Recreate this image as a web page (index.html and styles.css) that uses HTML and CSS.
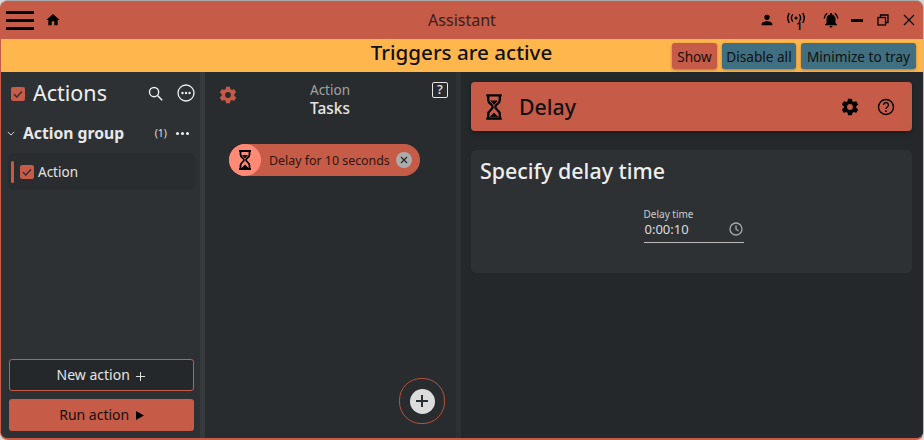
FILE: index.html
```html
<!DOCTYPE html>
<html lang="en">
<head>
<meta charset="utf-8">
<title>Assistant</title>
<link rel="stylesheet" href="styles.css">
</head>
<body>
<svg class="defs" width="0" height="0">
  <symbol id="hourglass" viewBox="0 0 14 20"><g fill="none" stroke="#000" stroke-width="1.800"><path d="M1 1h12M1 19h12"/><path d="M2.500 1v3.500c0 3 3.500 3.500 3.500 5.500s-3.500 2.500-3.500 5.500V19"/><path d="M11.500 1v3.500c0 3-3.500 3.500-3.500 5.500s3.500 2.500 3.500 5.500V19"/></g><path d="M4 5h6L7 8.500z"/><path d="M3.500 18 7 14.500l3.500 3.500z"/></symbol>
  <symbol id="gear" viewBox="0 0 24 24"><path d="M19.400 13c.04-.32.07-.66.07-1s-.03-.68-.07-1l2.110-1.650c.19-.15.24-.42.12-.64l-2-3.460c-.12-.22-.39-.3-.61-.22l-2.490 1c-.52-.4-1.080-.73-1.690-.98l-.38-2.650A.49.49 0 0 0 14 2h-4c-.25 0-.46.18-.49.420l-.38 2.650c-.61.25-1.170.59-1.690.98l-2.490-1c-.23-.09-.49 0-.61.220l-2 3.460c-.13.22-.07.49.12.640L4.570 11c-.04.32-.07.66-.07 1s.03.68.07 1l-2.110 1.650c-.19.15-.24.42-.12.64l2 3.460c.12.22.39.3.61.22l2.490-1c.52.4 1.080.73 1.690.98l.38 2.650c.03.24.24.42.49.42h4c.25 0 .46-.18.49-.42l.38-2.650c.61-.25 1.170-.59 1.690-.98l2.490 1c.23.09.49 0 .61-.22l2-3.460c.12-.22.07-.49-.12-.64L19.400 13zM12 15.500a3.500 3.500 0 1 1 0-7 3.500 3.500 0 0 1 0 7z"/></symbol>
  <symbol id="check" viewBox="0 0 16 16"><rect x="1" y="1" width="14" height="14" rx="2" fill="#c65b47"/><path d="M4 8.200l2.800 2.800L12 5.500" fill="none" stroke="#2b2e31" stroke-width="1.300"/></symbol>
</svg>
<div class="window">
  <header class="titlebar">
    <div class="title-left">
      <div class="burger"><span></span><span></span><span></span></div>
      <svg class="ico home" viewBox="0 0 24 24"><path d="M10 20v-6h4v6h5v-8h3L12 3 2 12h3v8z"/></svg>
    </div>
    <div class="app-title">Assistant</div>
    <div class="title-right">
      <svg class="ico person" viewBox="0 0 24 24"><path d="M12 12a4 4 0 1 0 0-8 4 4 0 0 0 0 8zm0 2c-2.700 0-8 1.300-8 4v2h16v-2c0-2.700-5.300-4-8-4z"/></svg>
      <div class="antenna">
        <svg viewBox="0 0 24 16"><circle cx="12" cy="8" r="1.800"/><g fill="none" stroke="#000" stroke-width="1.700" stroke-linecap="round"><path d="M8 4.500a6 6 0 0 0 0 7"/><path d="M16 4.500a6 6 0 0 1 0 7"/><path d="M4 3a10 10 0 0 0 0 10"/><path d="M20 3a10 10 0 0 1 0 10"/></g></svg>
        <span class="antenna-count">1</span>
      </div>
      <svg class="ico bell" viewBox="0 0 24 24"><path d="M12 22a2 2 0 0 0 2-2h-4a2 2 0 0 0 2 2zm6-6v-5c0-3.100-1.600-5.600-4.500-6.300V4a1.500 1.500 0 0 0-3 0v.7C7.600 5.400 6 7.900 6 11v5l-2 2v1h16v-1l-2-2z"/><path d="M7.600 3.600 6.200 2.200A10.400 10.400 0 0 0 2 10h2a8.400 8.400 0 0 1 3.600-6.400zM20 10h2a10.400 10.400 0 0 0-4.200-7.800l-1.400 1.400A8.400 8.400 0 0 1 20 10z"/></svg>
      <span class="minimize"></span>
      <svg class="restore" viewBox="0 0 12 12" fill="none" stroke="#000" stroke-width="1.300"><rect x="1" y="3.500" width="7.500" height="7.500"/><path d="M3.500 3.500V1H11v7.500H8.500"/></svg>
      <svg class="close" viewBox="0 0 12 12" fill="none" stroke="#000" stroke-width="1.100"><path d="M1 1l10 10M11 1 1 11"/></svg>
    </div>
  </header>
  <div class="banner">
    <div class="banner-text">Triggers are active</div>
    <div class="banner-buttons">
      <button class="bbtn bbtn-red">Show</button>
      <button class="bbtn bbtn-teal">Disable all</button>
      <button class="bbtn bbtn-teal">Minimize to tray</button>
    </div>
  </div>
  <main class="panels">
    <aside class="sidebar">
      <div class="side-head">
        <svg class="head-check"><use href="#check"/></svg>
        <span class="side-title">Actions</span>
        <svg class="side-search" viewBox="0 0 24 24" fill="none" stroke="#eee" stroke-width="2"><circle cx="10" cy="10" r="6.500"/><path d="M15 15l6.500 6.500"/></svg>
        <svg class="side-more" viewBox="0 0 20 20"><circle cx="10" cy="10" r="8" fill="none" stroke="#eee" stroke-width="1.300"/><circle cx="6.500" cy="10" r="1.200" fill="#eee"/><circle cx="10" cy="10" r="1.200" fill="#eee"/><circle cx="13.500" cy="10" r="1.200" fill="#eee"/></svg>
      </div>
      <div class="group">
        <svg class="chev" viewBox="0 0 10 6" fill="none" stroke="#ddd" stroke-width="1.200"><path d="M1 1l4 4 4-4"/></svg>
        <span class="group-name">Action group</span>
        <span class="group-count">(1)</span>
        <span class="dots"><i></i><i></i><i></i></span>
      </div>
      <div class="action-row">
        <span class="action-mark"></span>
        <svg class="row-check"><use href="#check"/></svg>
        <span class="action-name">Action</span>
      </div>
      <div class="side-actions">
        <button class="btn-new">New action <svg class="plus" viewBox="0 0 12 12" stroke="#ddd" stroke-width="1.100"><path d="M6 1v10M1 6h10"/></svg></button>
        <button class="btn-run">Run action <svg class="play" viewBox="0 0 8 9"><path d="M0 0l8 4.500L0 9z"/></svg></button>
      </div>
    </aside>
    <section class="tasks">
      <div class="tasks-head">
        <svg class="tasks-gear"><use href="#gear"/></svg>
        <div class="tasks-title"><div class="tasks-sub">Action</div><div class="tasks-name">Tasks</div></div>
        <span class="help-box">?</span>
      </div>
      <div class="chip">
        <span class="chip-icon"><svg class="chip-glass"><use href="#hourglass"/></svg></span>
        <span class="chip-text">Delay for 10 seconds</span>
        <span class="chip-x"><svg viewBox="0 0 8 8" stroke="#222" stroke-width="1.100"><path d="M1 1l6 6M7 1 1 7"/></svg></span>
      </div>
      <div class="fab-wrap">
        <div class="fab-ring"><span class="fab"><svg viewBox="0 0 14 14" stroke="#2b2e31" stroke-width="2"><path d="M7 1v12M1 7h12"/></svg></span></div>
      </div>
    </section>
    <section class="detail">
      <div class="detail-head">
        <svg class="detail-glass"><use href="#hourglass"/></svg>
        <span class="detail-title">Delay</span>
        <svg class="detail-gear"><use href="#gear"/></svg>
        <svg class="detail-help" viewBox="0 0 20 20"><circle cx="10" cy="10" r="7.500" fill="none" stroke="#000" stroke-width="1.400"/><path d="M7.600 8a2.400 2.400 0 1 1 3.700 2c-.9.600-1.300 1-1.300 2" fill="none" stroke="#000" stroke-width="1.400"/><circle cx="10" cy="14.200" r=".9"/></svg>
      </div>
      <div class="card">
        <h2 class="card-title">Specify delay time</h2>
        <div class="field-wrap">
          <div class="field">
            <div class="field-label">Delay time</div>
            <div class="field-input"><span>0:00:10</span><svg class="clock" viewBox="0 0 16 16" fill="none" stroke="#a5a7a9" stroke-width="1.300"><circle cx="8" cy="8" r="6"/><path d="M8 4.500V8l2.500 2"/></svg></div>
          </div>
        </div>
      </div>
    </section>
  </main>
</div>
</body>
</html>
```
FILE: styles.css
```css
* { box-sizing: border-box; }
html, body { margin: 0; height: 100%; }
body {
  width: 924px;
  height: 440px;
  overflow: hidden;
  background: #d8d8d8;
  font-family: "Noto Sans", "Open Sans", sans-serif;
  color: #eee;
}
.defs { position: absolute; }
button { font-family: inherit; cursor: pointer; }
.window {
  width: 924px;
  height: 440px;
  display: flex;
  flex-direction: column;
  background: #c65b47;
  border: 1px solid #c65b47;
  border-top: 1px solid #aaa;
  border-right: 1px solid #bbb;
  border-bottom: 2px solid #c65b47;
  border-radius: 8px;
  overflow: hidden;
}
.titlebar {
  height: 38px;
  flex: none;
  display: flex;
  align-items: center;
  position: relative;
  background: #c65b47;
  padding: 0 7px 0 5px;
}
.title-left { display: flex; align-items: center; gap: 11px; }
.burger { width: 28px; display: flex; flex-direction: column; gap: 5px; }
.burger span { height: 3px; background: #000; }
.ico { fill: #000; display: block; }
.home { width: 16px; height: 16px; }
.app-title {
  position: absolute;
  left: 0; right: 0;
  top: 8px;
  text-align: center;
  font-size: 16px;
  line-height: 22px;
  color: #3a1f1a;
}
.title-right { margin-left: auto; display: flex; align-items: center; }
.person { width: 16px; height: 16px; margin-right: 10px; }
.antenna { width: 22px; height: 20px; position: relative; margin-right: 15px; margin-top: 2px; }
.antenna svg { width: 22px; height: 14px; display: block; }
.antenna-count { position: absolute; left: 11px; top: 8px; font-size: 11px; line-height: 13px; font-weight: 600; color: #000; }
.bell { width: 18px; height: 18px; margin-right: 11px; }
.minimize { width: 12px; height: 3px; background: #000; margin-right: 14px; }
.restore { width: 12px; height: 12px; margin-right: 12px; }
.close { width: 12px; height: 12px; margin-right: 1px; margin-left: 2px; }
.banner {
  height: 33px;
  flex: none;
  position: relative;
  background: #ffb74d;
  display: flex;
  align-items: center;
  justify-content: flex-end;
  padding-right: 7px;
}
.banner-text {
  position: absolute;
  left: 0; right: 0;
  top: 0;
  text-align: center;
  padding-right: 1px;
  font-size: 20.600px;
  line-height: 26px;
  font-weight: 500;
  color: #111;
}
.banner-buttons { display: flex; gap: 5px; position: relative; margin-top: 1px; }
.bbtn {
  height: 26px;
  padding: 0;
  border: 0;
  border-radius: 3px;
  font-size: 13.600px;
  color: #111;
  box-shadow: 0 1px 3px rgba(0,0,0,.35);
  white-space: nowrap;
}
.bbtn-red { background: #c65b47; width: 45px; }
.bbtn-teal { background: #3f6f80; }
.bbtn-teal:nth-child(2) { width: 74px; }
.bbtn-teal:nth-child(3) { width: 115px; }
.panels { flex: 1; display: flex; min-height: 0; background: #25282a; }
.sidebar {
  width: 204px;
  flex: none;
  display: flex;
  flex-direction: column;
  background: #2e3134;
  border-right: 5px solid #363a3d;
  padding: 0 5px 0 8px;
  border-bottom-left-radius: 6px;
}
.side-head { height: 42px; display: flex; align-items: center; padding-left: 1px; }
.head-check { width: 16px; height: 16px; margin-right: 7px; margin-top: 2px; }
.side-title { font-size: 21.500px; line-height: 30px; color: #eee; }
.side-search { width: 17px; height: 17px; margin-left: auto; }
.side-more { width: 20px; height: 20px; margin-left: 12px; margin-right: -1px; }
.group { height: 38px; display: flex; align-items: center; }
.chev { width: 8px; height: 5px; margin-right: 8px; margin-left: -2px; }
.group-name { font-size: 15.700px; font-weight: 700; color: #e8e8e8; }
.group-count { font-size: 10.500px; color: #ddd; margin-left: auto; margin-right: 9px; }
.dots { display: flex; gap: 2px; margin-right: 6px; }
.dots i { width: 3px; height: 3px; border-radius: 50%; background: #eee; }
.action-row {
  height: 37px;
  margin: 1px 0 0 -1px;
  display: flex;
  align-items: center;
  background: #2a2d30;
  border-radius: 5px;
  padding-left: 3px;
}
.action-mark { width: 3px; height: 22px; border-radius: 2px; background: #c65b47; margin-right: 5px; }
.row-check { width: 16px; height: 16px; margin-right: 3px; }
.action-name { font-size: 13.500px; color: #e4e4e4; }
.side-actions { margin: auto 1px 0 0; display: flex; flex-direction: column; gap: 8px; padding-bottom: 7px; }
.btn-new {
  height: 32px;
  background: #25282a;
  border: 1px solid #c65b47;
  border-radius: 3px;
  font-size: 14px;
  color: #e4e4e4;
  padding: 0 0 2px;
}
.plus { width: 11px; height: 11px; margin-left: 2px; vertical-align: -2px; }
.btn-run {
  height: 32px;
  background: #c65b47;
  border: 0;
  border-radius: 3px;
  font-size: 14px;
  color: #111;
  padding: 0 0 2px;
}
.play { width: 8px; height: 9px; margin-left: 3px; }
.tasks {
  width: 256px;
  flex: none;
  display: flex;
  flex-direction: column;
  background: #292c2f;
  border-right: 5px solid #2e3134;
  padding: 0 8px 14px 13px;
}
.tasks-head { height: 52px; display: flex; align-items: flex-start; position: relative; }
.tasks-gear { width: 20px; height: 20px; fill: #c65b47; margin-top: 13px; flex: none; }
.tasks-title { flex: 1; text-align: center; margin-top: 9px; padding-right: 10px; }
.tasks-sub { font-size: 13.500px; line-height: 18px; color: #a0a2a4; }
.tasks-name { font-size: 15.400px; line-height: 19px; font-weight: 500; color: #e6e6e6; }
.help-box {
  width: 16px;
  height: 16px;
  margin-top: 10px;
  border: 1.500px solid #e6e6e6;
  border-radius: 2px;
  font-size: 13px;
  line-height: 13px;
  font-weight: 500;
  text-align: center;
  color: #e6e6e6;
}
.chip {
  margin-top: 20px;
  margin-left: 11px;
  width: 191px;
  height: 32px;
  display: flex;
  align-items: center;
  background: #c65b47;
  border-radius: 16px;
}
.chip-icon {
  width: 32px;
  height: 32px;
  border-radius: 50%;
  background: #ff8a75;
  display: flex;
  align-items: center;
  justify-content: center;
  flex: none;
}
.chip-glass { width: 14px; height: 20px; fill: #000; }
.chip-text { margin-left: 8px; font-size: 12.400px; color: #2f1510; white-space: nowrap; }
.chip-x {
  width: 16px;
  height: 16px;
  margin-left: auto;
  margin-right: 8px;
  border-radius: 50%;
  background: #ababab;
  display: flex;
  align-items: center;
  justify-content: center;
}
.chip-x svg { width: 8px; height: 8px; }
.fab-wrap { margin-top: auto; display: flex; justify-content: flex-end; padding-right: 3px; }
.fab-ring {
  width: 46px;
  height: 46px;
  border: 1.500px solid #b5523f;
  border-radius: 48%;
  display: flex;
  align-items: center;
  justify-content: center;
}
.fab {
  width: 25px;
  height: 25px;
  border-radius: 50%;
  background: #dcdcdc;
  display: flex;
  align-items: center;
  justify-content: center;
}
.fab svg { width: 14px; height: 14px; }
.detail { flex: 1; padding: 10px 11px 0 10px; background: #25282a; min-width: 0; }
.detail-head {
  height: 49px;
  display: flex;
  align-items: center;
  background: #c65b47;
  border-radius: 4px;
  padding: 0 16px 0 14px;
  box-shadow: 0 2px 4px rgba(0,0,0,.3);
}
.detail-glass { width: 18px; height: 26px; fill: #000; flex: none; }
.detail-title { margin-left: 16px; font-size: 21.300px; font-weight: 500; color: #111; }
.detail-gear { width: 20px; height: 20px; fill: #000; margin-left: auto; }
.detail-help { width: 20px; height: 20px; margin-left: 16px; }
.card {
  margin-top: 19px;
  height: 123px;
  background: #2e3134;
  border-radius: 5px;
  padding: 6px 9px;
}
.card-title { margin: 0; font-size: 21.400px; line-height: 30px; font-weight: 500; color: #eee; }
.field-wrap { display: flex; justify-content: center; margin-top: 22px; padding-left: 4px; }
.field { width: 100px; }
.field-label { font-size: 10px; line-height: 13px; color: #ccc; }
.field-input {
  height: 22px;
  display: flex;
  align-items: center;
  justify-content: space-between;
  border-bottom: 1px solid #bbb;
  font-size: 13px;
  color: #ddd;
  padding: 0 0 5px 1px;
}
.clock { width: 16px; height: 16px; }
```
